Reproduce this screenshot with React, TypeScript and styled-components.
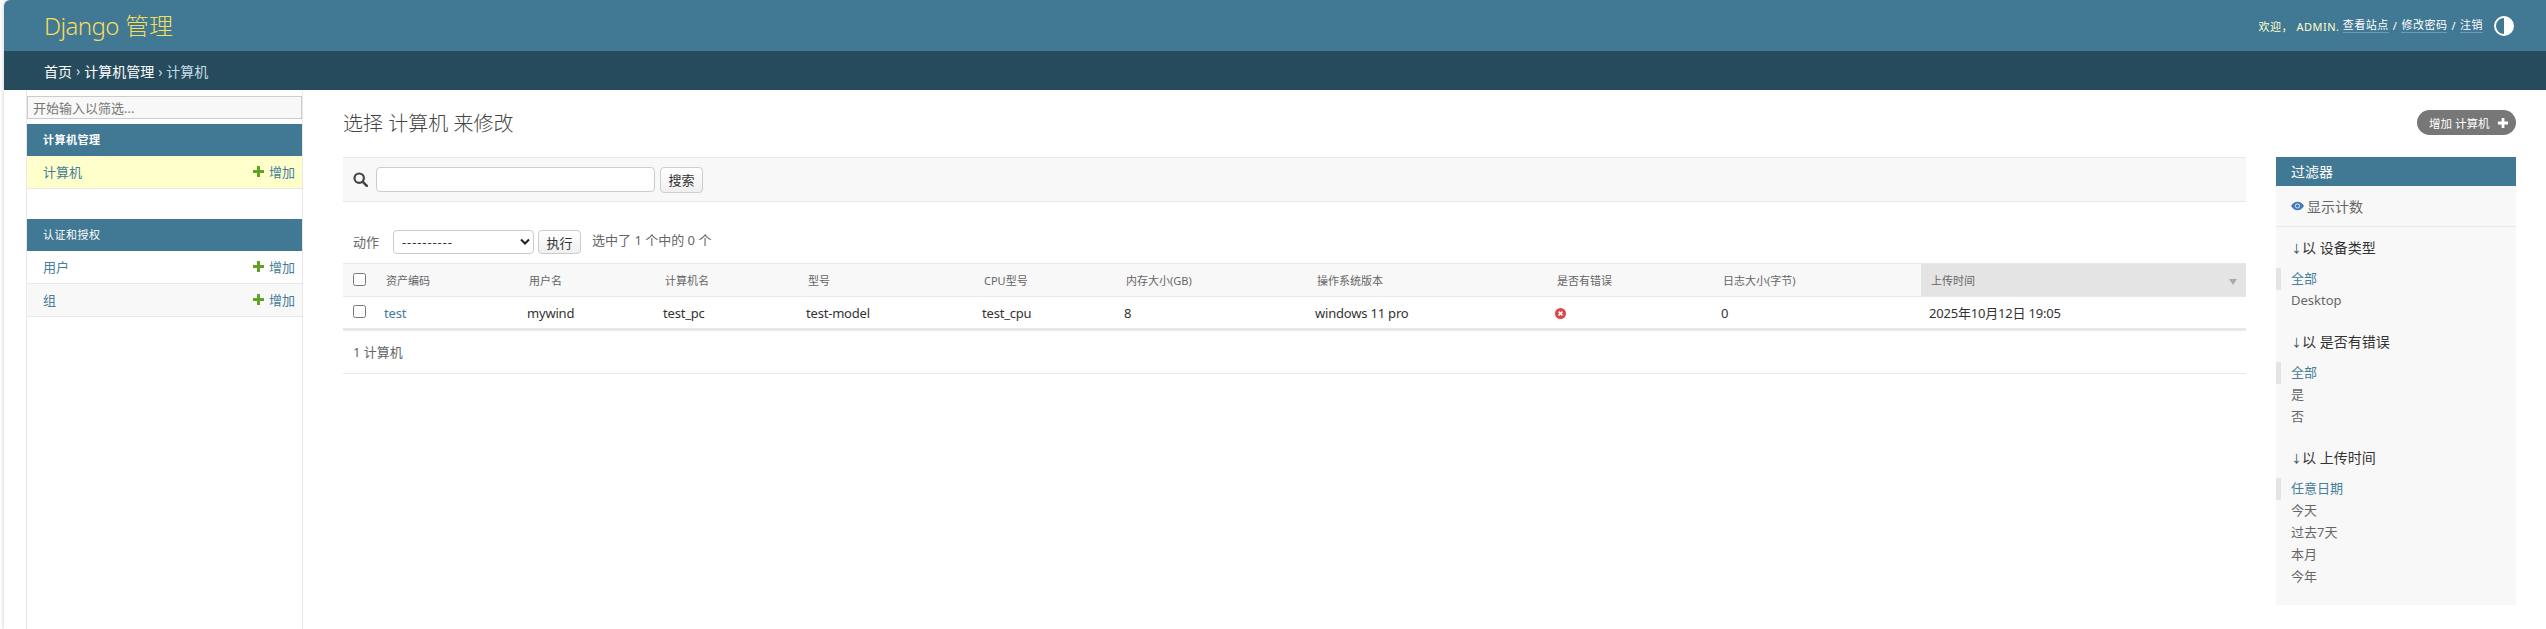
import React from "react";
import styled, { createGlobalStyle } from "styled-components";

const Global = createGlobalStyle`
  html, body { margin: 0; padding: 0; background: #fff; }
  body { font-family: "Noto Sans", "Noto Sans CJK SC", sans-serif; font-size: 13px; color: #333; }
  * { box-sizing: border-box; }
`;

const Page = styled.div`
  height: 629px;
  overflow: hidden;
  padding-left: 4px;
`;
const Shell = styled.div`
  height: 629px;
  border-top-left-radius: 6px;
  overflow: hidden;
  background: #fff;
  box-shadow: 0 0 4px rgba(0, 0, 0, 0.22);
  display: flex;
  flex-direction: column;
`;
const Header = styled.header`
  height: 51px;
  background: #417893;
  display: flex;
  align-items: center;
  justify-content: space-between;
  padding: 0 32px 0 40px;
`;
const Brand = styled.div`
  font-size: 24px;
  font-weight: 300;
  color: #f5dd5d;
  line-height: 53px;
`;
const BrandLatin = styled.span`
  letter-spacing: -0.6px;
`;
const UserTools = styled.div`
  display: flex;
  align-items: center;
  font-size: 11px;
  letter-spacing: 0.5px;
  color: #ffc;
`;
const ToolLink = styled.span`
  color: #fff;
  border-bottom: 1px solid rgba(255, 255, 255, 0.25);
  line-height: 14px;
`;
const Sep = styled.span`
  color: #fff;
  margin: 0 4px;
`;
const Toggle = styled.svg`
  width: 20px;
  height: 20px;
  margin-left: 11px;
`;
const Crumbs = styled.div`
  height: 39px;
  background: #264b5d;
  font-size: 14px;
  padding-left: 40px;
  display: flex;
  align-items: center;
  gap: 4px;
  color: #c4dce8;
`;
const CrumbLink = styled.span`
  color: #fff;
`;
const Body = styled.div`
  flex: 1;
  display: flex;
  align-items: stretch;
`;
const Sidebar = styled.aside`
  width: 277px;
  margin-left: 22px;
  border-left: 1px solid #e8e8e8;
  border-right: 1px solid #e8e8e8;
  padding-top: 6px;
  flex: none;
`;
const NavFilter = styled.input`
  display: block;
  width: 275px;
  height: 23px;
  background: #f8f8f8;
  border: 1px solid #ccc;
  padding: 0 5px;
  font: inherit;
  font-size: 13px;
  color: #333;
  margin-bottom: 5px;
  &::placeholder { color: #777; opacity: 1; }
`;
const Module = styled.div`
  margin-bottom: 30px;
`;
const ModuleTitle = styled.div<{ $bold?: boolean }>`
  height: 32px;
  background: #417893;
  color: #fff;
  font-size: 11px;
  padding-left: 16px;
  line-height: 31px;
  letter-spacing: 0.5px;
  font-weight: ${(p) => (p.$bold ? 700 : 400)};
`;
const ModuleRow = styled.div<{ $bg?: string }>`
  height: 33px;
  background: ${(p) => p.$bg ?? "#fff"};
  border-bottom: 1px solid #e8e8e8;
  display: flex;
  align-items: center;
  justify-content: space-between;
  padding: 0 7px 2px 16px;
  color: #447e9b;
`;
const AddLink = styled.span`
  display: flex;
  align-items: center;
  gap: 4px;
  color: #447e9b;
`;
const Main = styled.main`
  flex: 1;
  padding: 20px 30px 0 40px;
  min-width: 0;
`;
const TopRow = styled.div`
  display: flex;
  justify-content: space-between;
  align-items: flex-start;
  height: 47px;
`;
const Title = styled.h1`
  margin: 0;
  font-size: 20px;
  font-weight: 300;
  color: #444;
  line-height: 28px;
`;
const AddButton = styled.div`
  height: 25px;
  width: 99px;
  border-radius: 15px;
  background: #777;
  color: #fff;
  font-size: 11.5px;
  padding-left: 12px;
  display: flex;
  align-items: center;
  gap: 7px;
`;
const Columns = styled.div`
  display: flex;
  gap: 30px;
  align-items: flex-start;
`;
const ListCol = styled.div`
  flex: 1;
  min-width: 0;
`;
const SearchBar = styled.div`
  height: 45px;
  background: #f8f8f8;
  border-top: 1px solid #e8e8e8;
  border-bottom: 1px solid #e8e8e8;
  display: flex;
  align-items: center;
  padding-left: 10px;
`;
const SearchInput = styled.div`
  width: 279px;
  height: 25px;
  margin: 0 1px 0 8px;
  background: #fff;
  border: 1px solid #ccc;
  border-radius: 4px;
`;
const Btn = styled.div<{ $h: number }>`
  width: 43px;
  height: ${(p) => p.$h}px;
  margin-left: 4px;
  border: 1px solid #ccc;
  border-radius: 4px;
  background: linear-gradient(#fff, #f0f0f0);
  font-size: 13px;
  color: #333;
  display: flex;
  align-items: center;
  justify-content: center;
`;
const Actions = styled.div`
  height: 61px;
  padding: 28px 0 0 10px;
  display: flex;
  align-items: flex-start;
  color: #666;
`;
const ActionLabel = styled.span`
  line-height: 24px;
  margin-right: 14px;
`;
const SelectBox = styled.div`
  width: 141px;
  height: 24px;
  border: 1px solid #ccc;
  border-radius: 4px;
  display: flex;
  align-items: center;
  justify-content: space-between;
  padding: 0 3px 0 8px;
  color: #333;
`;
const Dashes = styled.span`
  letter-spacing: 0.9px;
`;
const Counter = styled.span`
  margin-left: 11px;
  line-height: 20px;
  color: #666;
`;
const Table = styled.table`
  width: 100%;
  table-layout: fixed;
  border-collapse: collapse;
`;
const Th = styled.th<{ $sorted?: boolean }>`
  height: 33px;
  padding: 0 10px;
  text-align: left;
  font-size: 11px;
  font-weight: 400;
  color: #666;
  background: ${(p) => (p.$sorted ? "#e4e4e4" : "#f8f8f8")};
  border-top: 1px solid #e8e8e8;
  border-bottom: 1px solid #e8e8e8;
  position: relative;
`;
const Td = styled.td`
  height: 33px;
  padding: 0 8px;
  color: #333;
  letter-spacing: -0.2px;
  border-bottom: 3px solid #e8e8e8;
`;
const BoxTd = styled(Td)`
  padding-left: 10px;
`;
const RowLink = styled.span`
  color: #447e9b;
`;
const Box = styled.input`
  display: block;
  width: 13px;
  height: 13px;
  margin: -2px 0 0 0;
`;
const SortMark = styled.span`
  position: absolute;
  right: 9px;
  top: 15px;
  width: 0;
  height: 0;
  border-left: 4px solid transparent;
  border-right: 4px solid transparent;
  border-top: 6px solid #aaa;
`;
const Paginator = styled.div`
  height: 43px;
  padding-left: 10px;
  line-height: 43px;
  color: #666;
  border-bottom: 1px solid #e8e8e8;
`;
const Filter = styled.aside`
  width: 240px;
  height: 448px;
  background: #f8f8f8;
  flex: none;
`;
const FilterTitle = styled.div`
  height: 29px;
  background: #417893;
  color: #fff;
  font-size: 14px;
  padding-left: 15px;
  line-height: 29px;
`;
const Count = styled.div`
  height: 41px;
  border-bottom: 1px solid #e8e8e8;
  padding-left: 15px;
  display: flex;
  align-items: center;
  gap: 3px;
  font-size: 14px;
  color: #666;
`;
const Group = styled.div`
  padding-top: 11px;
  margin-bottom: 9px;
`;
const GroupTitle = styled.div`
  padding-left: 15px;
  line-height: 20px;
  color: #333;
  font-size: 14px;
  margin-bottom: 9px;
`;
const GroupItem = styled.div<{ $on?: boolean }>`
  height: 22px;
  line-height: 21px;
  padding-left: ${(p) => (p.$on ? 10 : 15)}px;
  border-left: ${(p) => (p.$on ? "5px solid #e4e4e4" : "none")};
  color: ${(p) => (p.$on ? "#447e9b" : "#666")};
`;
const Arrow = styled.span`
  display: inline-block;
  width: 11px;
  font-size: 11px;
  color: #264b5d;
`;

const Plus = ({ c = "#5fa225", s = 13 }: { c?: string; s?: number }) => (
  <svg width={s} height={s} viewBox="0 0 13 13">
    <path d="M5 1h3v4h4v3H8v4H5V8H1V5h4z" fill={c} />
  </svg>
);
const Search = () => (
  <svg width="15" height="15" viewBox="0 0 15 15">
    <circle cx="6.2" cy="6.2" r="4.7" fill="none" stroke="#444" strokeWidth="2.2" />
    <path d="M9.8 9.8l4 4" stroke="#444" strokeWidth="2.6" strokeLinecap="round" />
  </svg>
);
const Chevron = () => (
  <svg width="10" height="8" viewBox="0 0 10 8">
    <path d="M1 1.5l4 4 4-4" fill="none" stroke="#222" strokeWidth="2" />
  </svg>
);
const ErrorIcon = () => (
  <svg width="11" height="14" viewBox="0 0 11 14" style={{ display: "block" }}>
    <circle cx="5.5" cy="7.5" r="5.5" fill="#dd4646" />
    <path d="M3.6 5.6l3.8 3.8M7.4 5.6l-3.8 3.8" stroke="#fff" strokeWidth="1.6" />
  </svg>
);
const Eye = () => (
  <svg width="13" height="10" viewBox="0 0 14 10">
    <path d="M0 5c2-3 4.300-4.500 7-4.500S12 2 14 5c-2 3-4.300 4.500-7 4.500S2 8 0 5z" fill="#3f78bd" />
    <circle cx="7" cy="5" r="2.600" fill="#fff" />
    <circle cx="7" cy="5" r="1.800" fill="#3f78bd" />
  </svg>
);

const headers = ["资产编码", "用户名", "计算机名", "型号", "CPU型号", "内存大小(GB)", "操作系统版本", "是否有错误", "日志大小(字节)", "上传时间"];
const widths = [33, 143, 136, 143, 176, 142, 191, 240, 166, 208, 325];
const cells = ["mywind", "test_pc", "test-model", "test_cpu", "8", "windows 11 pro"];

export default function App() {
  return (
    <>
      <Global />
      <Page>
        <Shell>
          <Header>
            <Brand><BrandLatin>Django</BrandLatin> 管理</Brand>
            <UserTools>
              欢迎，&nbsp;ADMIN.&nbsp;
              <ToolLink>查看站点</ToolLink>
              <Sep>/</Sep>
              <ToolLink>修改密码</ToolLink>
              <Sep>/</Sep>
              <ToolLink>注销</ToolLink>
              <Toggle viewBox="0 0 20 20">
                <circle cx="10" cy="10" r="9" fill="#417893" stroke="#fff" strokeWidth="2" />
                <path d="M10 1a9 9 0 0 1 0 18z" fill="#fff" />
              </Toggle>
            </UserTools>
          </Header>
          <Crumbs>
            <CrumbLink>首页</CrumbLink> › <CrumbLink>计算机管理</CrumbLink> › 计算机
          </Crumbs>
          <Body>
            <Sidebar>
              <NavFilter placeholder="开始输入以筛选..." />
              <Module>
                <ModuleTitle $bold>计算机管理</ModuleTitle>
                <ModuleRow $bg="#ffffcc">
                  计算机
                  <AddLink><Plus />增加</AddLink>
                </ModuleRow>
              </Module>
              <Module>
                <ModuleTitle>认证和授权</ModuleTitle>
                <ModuleRow>
                  用户
                  <AddLink><Plus />增加</AddLink>
                </ModuleRow>
                <ModuleRow $bg="#f8f8f8">
                  组
                  <AddLink><Plus />增加</AddLink>
                </ModuleRow>
              </Module>
            </Sidebar>
            <Main>
              <TopRow>
                <Title>选择 计算机 来修改</Title>
                <AddButton>增加 计算机 <Plus c="#fff" s={12} /></AddButton>
              </TopRow>
              <Columns>
                <ListCol>
                  <SearchBar>
                    <Search />
                    <SearchInput />
                    <Btn $h={26}>搜索</Btn>
                  </SearchBar>
                  <Actions>
                    <ActionLabel>动作</ActionLabel>
                    <SelectBox><Dashes>----------</Dashes> <Chevron /></SelectBox>
                    <Btn $h={24}>执行</Btn>
                    <Counter>选中了 1 个中的 0 个</Counter>
                  </Actions>
                  <Table>
                    <colgroup>
                      {widths.map((w, i) => <col key={i} style={{ width: w }} />)}
                    </colgroup>
                    <thead>
                      <tr>
                        <Th><Box type="checkbox" /></Th>
                        {headers.map((h, i) => (
                          <Th key={h} $sorted={i === 9}>
                            {h}
                            {i === 9 && <SortMark />}
                          </Th>
                        ))}
                      </tr>
                    </thead>
                    <tbody>
                      <tr>
                        <BoxTd><Box type="checkbox" /></BoxTd>
                        <Td><RowLink>test</RowLink></Td>
                        {cells.map((c) => <Td key={c}>{c}</Td>)}
                        <Td><ErrorIcon /></Td>
                        <Td>0</Td>
                        <Td>2025年10月12日 19:05</Td>
                      </tr>
                    </tbody>
                  </Table>
                  <Paginator>1 计算机</Paginator>
                </ListCol>
                <Filter>
                  <FilterTitle>过滤器</FilterTitle>
                  <Count><Eye />显示计数</Count>
                  <Group>
                    <GroupTitle><Arrow>↓</Arrow>以 设备类型</GroupTitle>
                    <GroupItem $on>全部</GroupItem>
                    <GroupItem>Desktop</GroupItem>
                  </Group>
                  <Group>
                    <GroupTitle><Arrow>↓</Arrow>以 是否有错误</GroupTitle>
                    <GroupItem $on>全部</GroupItem>
                    <GroupItem>是</GroupItem>
                    <GroupItem>否</GroupItem>
                  </Group>
                  <Group>
                    <GroupTitle><Arrow>↓</Arrow>以 上传时间</GroupTitle>
                    <GroupItem $on>任意日期</GroupItem>
                    <GroupItem>今天</GroupItem>
                    <GroupItem>过去7天</GroupItem>
                    <GroupItem>本月</GroupItem>
                    <GroupItem>今年</GroupItem>
                  </Group>
                </Filter>
              </Columns>
            </Main>
          </Body>
        </Shell>
      </Page>
    </>
  );
}
